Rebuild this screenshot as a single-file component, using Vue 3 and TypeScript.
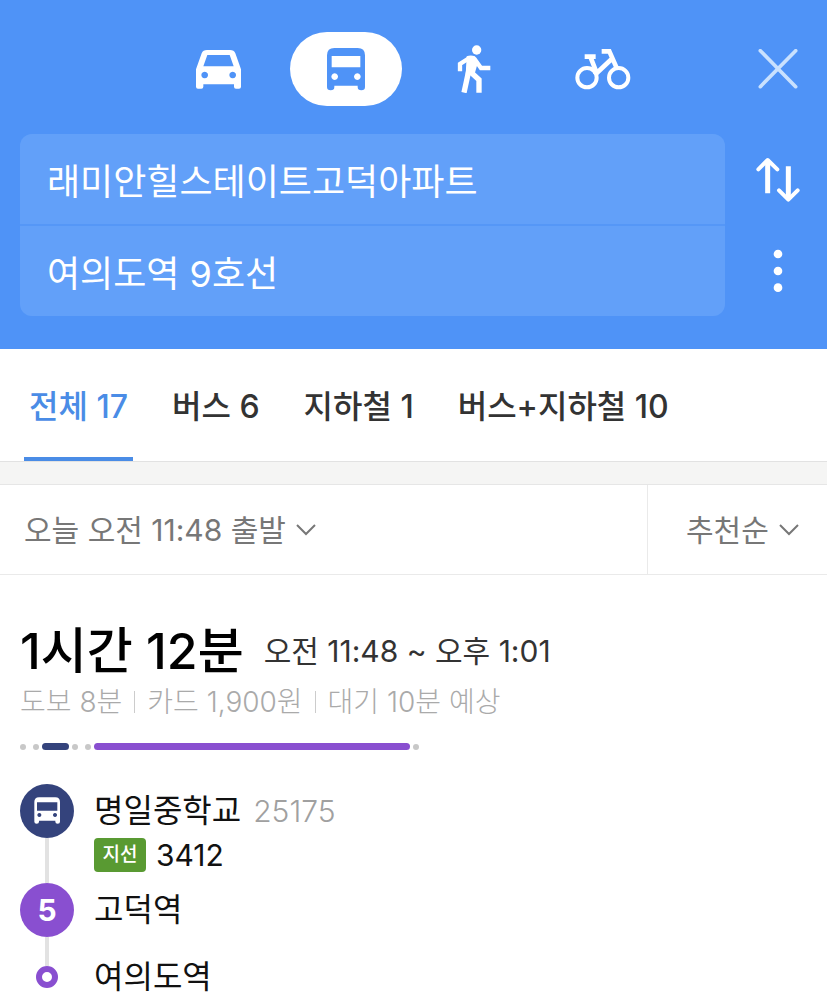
<script setup lang="ts">
import { ref } from 'vue'

interface Tab { id: string; label: string }
interface Segment { kind: 'walk' | 'bus' | 'subway'; dots?: number; length?: number }

const mode = ref('transit')
const origin = ref('래미안힐스테이트고덕아파트')
const destination = ref('여의도역 9호선')
const departure = ref('now')
const order = ref('recommended')
const activeTab = ref('all')

const tabs: Tab[] = [
  { id: 'all', label: '전체 17' },
  { id: 'bus', label: '버스 6' },
  { id: 'subway', label: '지하철 1' },
  { id: 'mixed', label: '버스+지하철 10' },
]

const segments: Segment[] = [
  { kind: 'walk', dots: 2 },
  { kind: 'bus', length: 27 },
  { kind: 'walk', dots: 2 },
  { kind: 'subway', length: 316 },
  { kind: 'walk', dots: 1 },
]

function swap() {
  const previous = origin.value
  origin.value = destination.value
  destination.value = previous
}
</script>

<template>
  <div class="app">
    <header class="search">
      <nav class="modes" aria-label="이동 수단">
        <button type="button" class="mode" :class="{ on: mode === 'car' }" aria-label="자동차" @click="mode = 'car'">
          <svg width="47" height="40" viewBox="42 85 141 120" fill="currentColor" fill-rule="evenodd">
            <path d="M62 98Q66 88 78 88H147Q159 88 163 98L180 146V198Q180 204 174 204H165Q159 204 159 198V191H67V198Q67 204 61 204H51Q45 204 45 198V146ZM79 103L67 137H158L146 103ZM71 153a10 10 0 1 0 .1 0ZM155 153a10 10 0 1 0 .1 0Z" />
          </svg>
        </button>
        <button type="button" class="mode" :class="{ on: mode === 'transit' }" aria-label="대중교통" @click="mode = 'transit'">
          <svg width="40" height="44" viewBox="437 82 120 132" fill="currentColor" fill-rule="evenodd">
            <path d="M440 107Q440 85 462 85H532Q554 85 554 107V202Q554 212 543 212T532 202V198H462V202Q462 212 451 212T440 202ZM454 109V143H540V109ZM463 161a10 10 0 1 0 .1 0ZM531 161a10 10 0 1 0 .1 0Z" />
          </svg>
        </button>
        <button type="button" class="mode" :class="{ on: mode === 'walk' }" aria-label="도보" @click="mode = 'walk'">
          <svg width="36" height="48" viewBox="80 74 108 144" fill="none" stroke="currentColor">
            <circle cx="142" cy="89" r="14" fill="currentColor" stroke="none" />
            <path d="M112 108Q124 103 137 108L146 126L136 160L109 163Z" fill="currentColor" stroke="none" />
            <path d="M92 153V131L120 113" stroke-width="13" />
            <path d="M134 114L155 143H183" stroke-width="13" />
            <path d="M119 148L104 217" stroke-width="16" />
            <path d="M123 154L149 178V217" stroke-width="16" />
          </svg>
        </button>
        <button type="button" class="mode" :class="{ on: mode === 'bike' }" aria-label="자전거" @click="mode = 'bike'">
          <svg width="57" height="42" viewBox="430 86 171 126" fill="none" stroke="currentColor" stroke-width="12">
            <circle cx="469" cy="175" r="29" />
            <circle cx="564" cy="175" r="29" />
            <path d="M462 112H495M479 112L497 158M513 96H536L560 150M543 119L492 167" stroke-width="14" />
          </svg>
        </button>
      </nav>
      <button type="button" class="tool" aria-label="닫기">
        <svg width="40" height="41" viewBox="982 82 120 123" fill="none" stroke="#c9e1fe" stroke-width="11" stroke-linecap="round">
          <path d="M989 87L1095 195M1095 87L989 195" />
        </svg>
      </button>

      <div class="fields">
        <input v-model="origin" type="text" aria-label="출발지" />
        <input v-model="destination" type="text" aria-label="도착지" />
      </div>
      <div class="tools">
        <button type="button" class="tool" aria-label="출발지와 도착지 바꾸기" @click="swap">
          <svg width="44" height="45" viewBox="346 106 132 135" fill="none" stroke="#fff" stroke-width="12" stroke-linecap="round" stroke-linejoin="round">
            <path d="M353 143L381 115L410 143M415 206L443 234L471 206" />
            <path d="M381 118V215M443 134V230" stroke-width="15" stroke-linecap="butt" />
          </svg>
        </button>
        <button type="button" class="tool" aria-label="더보기">
          <svg width="10" height="44" viewBox="397 386 30 132" fill="#fff">
            <circle cx="412" cy="401" r="13" />
            <circle cx="412" cy="452" r="13" />
            <circle cx="412" cy="502" r="13" />
          </svg>
        </button>
      </div>
    </header>

    <div class="tabs" role="tablist">
      <button
        v-for="tab in tabs"
        :key="tab.id"
        type="button"
        role="tab"
        class="tab"
        :class="{ active: activeTab === tab.id }"
        :aria-selected="activeTab === tab.id"
        @click="activeTab = tab.id"
      >{{ tab.label }}</button>
    </div>

    <div class="filters">
      <div class="filter when">
        <select v-model="departure" aria-label="출발 시간">
          <option value="now">오늘 오전 11:48 출발</option>
        </select>
        <svg width="20" height="12" viewBox="0 0 20 12" fill="none" stroke="#777" stroke-width="2"><path d="M1 1L10 10L19 1" /></svg>
      </div>
      <div class="filter sort">
        <select v-model="order" aria-label="정렬">
          <option value="recommended">추천순</option>
        </select>
        <svg width="20" height="12" viewBox="0 0 20 12" fill="none" stroke="#777" stroke-width="2"><path d="M1 1L10 10L19 1" /></svg>
      </div>
    </div>

    <main class="route">
      <div class="summary">
        <h1>1시간 12분</h1>
        <p class="time">오전 11:48 ~ 오후 1:01</p>
      </div>
      <ul class="facts">
        <li>도보 8분</li>
        <li>카드 1,900원</li>
        <li>대기 10분 예상</li>
      </ul>

      <div class="bar" aria-hidden="true">
        <template v-for="(segment, i) in segments" :key="i">
          <span v-if="segment.kind === 'walk'" class="walk"><i v-for="n in segment.dots" :key="n" /></span>
          <span v-else class="ride" :class="segment.kind" :style="{ width: segment.length + 'px' }" />
        </template>
      </div>

      <ol class="steps">
        <li class="step first">
          <div class="rail">
            <span class="node bus">
              <svg width="26" height="28" viewBox="102 83 78 84" fill="#fff" fill-rule="evenodd">
                <path d="M103 98Q103 84 117 84H166Q180 84 180 98V157Q180 163 173 163T166 157V154H117V157Q117 163 110 163T103 157ZM111 99V124H172V99ZM118 131a6 6 0 1 0 .1 0ZM165 131a6 6 0 1 0 .1 0Z" />
              </svg>
            </span>
            <span class="line" />
          </div>
          <div class="info">
            <p class="stop">명일중학교<span class="code">25175</span></p>
            <p class="bus-line"><span class="badge">지선</span><span>3412</span></p>
          </div>
        </li>
        <li class="step second">
          <div class="rail"><span class="node subway">5</span><span class="line" /></div>
          <div class="info"><p class="stop">고덕역</p></div>
        </li>
        <li class="step last">
          <div class="rail"><span class="line" /><span class="end" /><span class="tail" /></div>
          <div class="info"><p class="stop">여의도역</p></div>
        </li>
      </ol>
    </main>
  </div>
</template>

<style>
body { margin: 0; background: #fff; }
</style>

<style scoped>
.app, .app button, .app input, .app select {
  font-family: Inter, "Noto Sans CJK KR", sans-serif;
}
.app { background: #fff; color: #111; }
.app * { box-sizing: border-box; }
button { border: 0; padding: 0; background: none; cursor: pointer; }
svg { display: block; flex: none; }
h1, p, ul, ol { margin: 0; padding: 0; list-style: none; }

.search {
  display: grid;
  grid-template-columns: 1fr 98px;
  column-gap: 4px;
  row-gap: 28px;
  padding: 32px 0 33px 20px;
  background: #4f93f7;
}
.modes { display: flex; justify-content: flex-end; gap: 16px; padding-right: 67px; }
.mode {
  display: flex;
  align-items: center;
  justify-content: center;
  width: 112px;
  height: 74px;
  border-radius: 37px;
  color: #fff;
}
.mode.on { background: #fff; color: #4f93f7; }
.tool { display: flex; align-items: center; justify-content: center; }
.tools { display: grid; grid-template-rows: 1fr 1fr; }

.fields {
  display: grid;
  gap: 2px;
  border-radius: 12px;
  overflow: hidden;
  background: #5597f7;
}
.fields input {
  width: 100%;
  height: 90px;
  border: 0;
  padding: 0 27px;
  background: #62a0f9;
  color: #fff;
  font-size: 36px;
  font-weight: 400;
  outline: none;
}

.tabs {
  display: flex;
  gap: 34px;
  height: 113px;
  padding: 0 24px;
  border-bottom: 1px solid #e2e2e2;
}
.tab {
  padding: 2px 5px 0;
  border-bottom: 4px solid transparent;
  color: #333;
  font-size: 32px;
  font-weight: 500;
  white-space: nowrap;
}
.tab.active { border-color: #4a8ce6; color: #4a8ce6; }

.filters {
  display: flex;
  border-top: 1px solid #e6e6e6;
  border-bottom: 1px solid #eaeaea;
  margin-top: 22px;
  box-shadow: 0 -22px #f5f5f4;
}
.filter { display: flex; align-items: center; gap: 10px; height: 89px; }
.filter select {
  appearance: none;
  border: 0;
  padding: 0;
  background: none;
  color: #777;
  font-size: 30px;
  line-height: 40px;
}
.when { flex: 1; padding-left: 24px; }
.sort { justify-content: center; width: 180px; padding-left: 10px; border-left: 1px solid #eaeaea; }

.route { padding: 47px 20px 0; }
.summary { display: flex; align-items: center; gap: 20px; height: 58px; white-space: nowrap; }
h1 { font-size: 50px; line-height: 58px; font-weight: 500; color: #000; }
.time { font-size: 30px; line-height: 40px; color: #333; }
.facts { display: flex; align-items: center; height: 44px; color: #aaa; font-size: 28px; line-height: 40px; font-weight: 300; white-space: nowrap; }
.facts li { display: flex; align-items: center; }
.facts li + li::before { content: ""; width: 1px; height: 22px; margin: 0 12px; background: #ccc; }

.bar { display: flex; align-items: center; gap: 3px; height: 7px; margin-top: 19px; }
.walk { display: flex; gap: 7px; }
.walk i { width: 6px; height: 6px; border-radius: 50%; background: #c8c8c8; }
.ride { height: 7px; border-radius: 4px; }
.ride.bus { background: #34437c; }
.ride.subway { background: #894fd0; }

.steps { margin-top: 34px; }
.step { display: flex; gap: 20px; }
.first { min-height: 99px; }
.second { min-height: 71px; }
.last { height: 46px; }
.rail { display: flex; flex-direction: column; align-items: center; width: 54px; flex: none; }
.line { flex: 1; width: 4px; background: #e2e2e2; }
.tail { flex: 1; }
.node {
  display: flex;
  align-items: center;
  justify-content: center;
  width: 54px;
  height: 54px;
  border-radius: 50%;
  color: #fff;
  font-size: 30px;
  line-height: 54px;
  font-weight: 700;
}
.node.bus { background: #34437c; }
.node.subway { background: #894fd0; }
.end { width: 22px; height: 22px; border: 6px solid #894fd0; border-radius: 50%; background: #fff; }
.stop { display: flex; align-items: center; gap: 12px; height: 54px; font-size: 32px; line-height: 40px; white-space: nowrap; }
.last .stop { height: 46px; }
.code { color: #a0a0a0; font-size: 30px; font-weight: 300; }
.bus-line { display: flex; align-items: center; gap: 10px; height: 34px; font-size: 30px; line-height: 34px; }
.badge {
  width: 52px;
  border-radius: 4px;
  background: #599a32;
  color: #fff;
  font-size: 19px;
  font-weight: 500;
  text-align: center;
}
</style>
